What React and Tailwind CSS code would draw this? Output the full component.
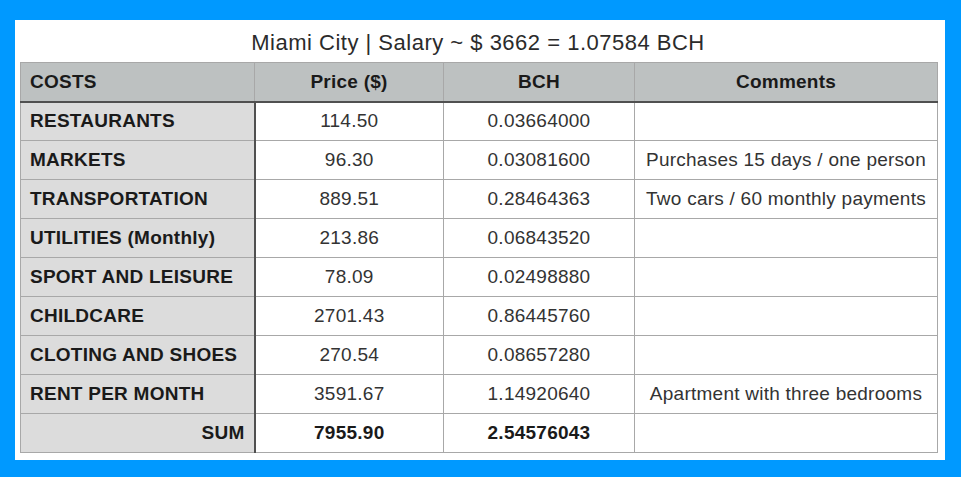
import React from "react";

const rows = [
  ["RESTAURANTS", "114.50", "0.03664000", ""],
  ["MARKETS", "96.30", "0.03081600", "Purchases 15 days / one person"],
  ["TRANSPORTATION", "889.51", "0.28464363", "Two cars / 60 monthly payments"],
  ["UTILITIES (Monthly)", "213.86", "0.06843520", ""],
  ["SPORT AND LEISURE", "78.09", "0.02498880", ""],
  ["CHILDCARE", "2701.43", "0.86445760", ""],
  ["CLOTING AND SHOES", "270.54", "0.08657280", ""],
  ["RENT PER MONTH", "3591.67", "1.14920640", "Apartment with three bedrooms"],
];

export default function App() {
  return (
    <div
      className="w-[961px] h-[477px] bg-[#0099ff] pt-[20px] pl-[15px]"
      style={{ fontFamily: '"Liberation Sans", Arial, sans-serif' }}
    >
      <div className="w-[930px] h-[440px] bg-white pt-[3px] pl-[5px]">
        <div className="h-[39px] flex items-center justify-center text-[22px] tracking-[0.5px] text-[#2b2b2b] w-[916px]">
          Miami City | Salary ~ $ 3662 = 1.07584 BCH
        </div>
        <table className="border-collapse w-[917px] table-fixed text-[19px] tracking-[0.25px] text-[#1a1a1a] border border-[#a8a8a8]">
          <colgroup>
            <col className="w-[234px]" />
            <col className="w-[189px]" />
            <col className="w-[191px]" />
            <col className="w-[303px]" />
          </colgroup>
          <thead>
            <tr className="h-[39px] bg-[#bdc1c1] font-bold">
              <td className="border-b-2 border-b-[#505050] border-r border-r-[#a8a8a8] px-[9px] text-left">COSTS</td>
              <td className="border-b-2 border-b-[#505050] border-r border-r-[#a8a8a8] text-center">Price ($)</td>
              <td className="border-b-2 border-b-[#505050] border-r border-r-[#a8a8a8] text-center">BCH</td>
              <td className="border-b-2 border-b-[#505050] text-center">Comments</td>
            </tr>
          </thead>
          <tbody>
            {rows.map((r) => (
              <tr key={r[0]} className="h-[39px]">
                <td className="bg-[#dcdcdc] font-bold px-[9px] whitespace-nowrap border-b border-b-[#a8a8a8] border-r-2 border-r-[#505050]">{r[0]}</td>
                <td className="text-center text-[#333] border-b border-b-[#a8a8a8] border-r border-r-[#a8a8a8]">{r[1]}</td>
                <td className="text-center text-[#333] border-b border-b-[#a8a8a8] border-r border-r-[#a8a8a8]">{r[2]}</td>
                <td className="text-center text-[#333] border-b border-b-[#a8a8a8] whitespace-nowrap">{r[3]}</td>
              </tr>
            ))}
            <tr className="h-[39px] font-bold">
              <td className="bg-[#dcdcdc] px-[9px] text-right border-r-2 border-r-[#505050]">SUM</td>
              <td className="text-center border-r border-r-[#a8a8a8]">7955.90</td>
              <td className="text-center border-r border-r-[#a8a8a8]">2.54576043</td>
              <td></td>
            </tr>
          </tbody>
        </table>
      </div>
    </div>
  );
}
